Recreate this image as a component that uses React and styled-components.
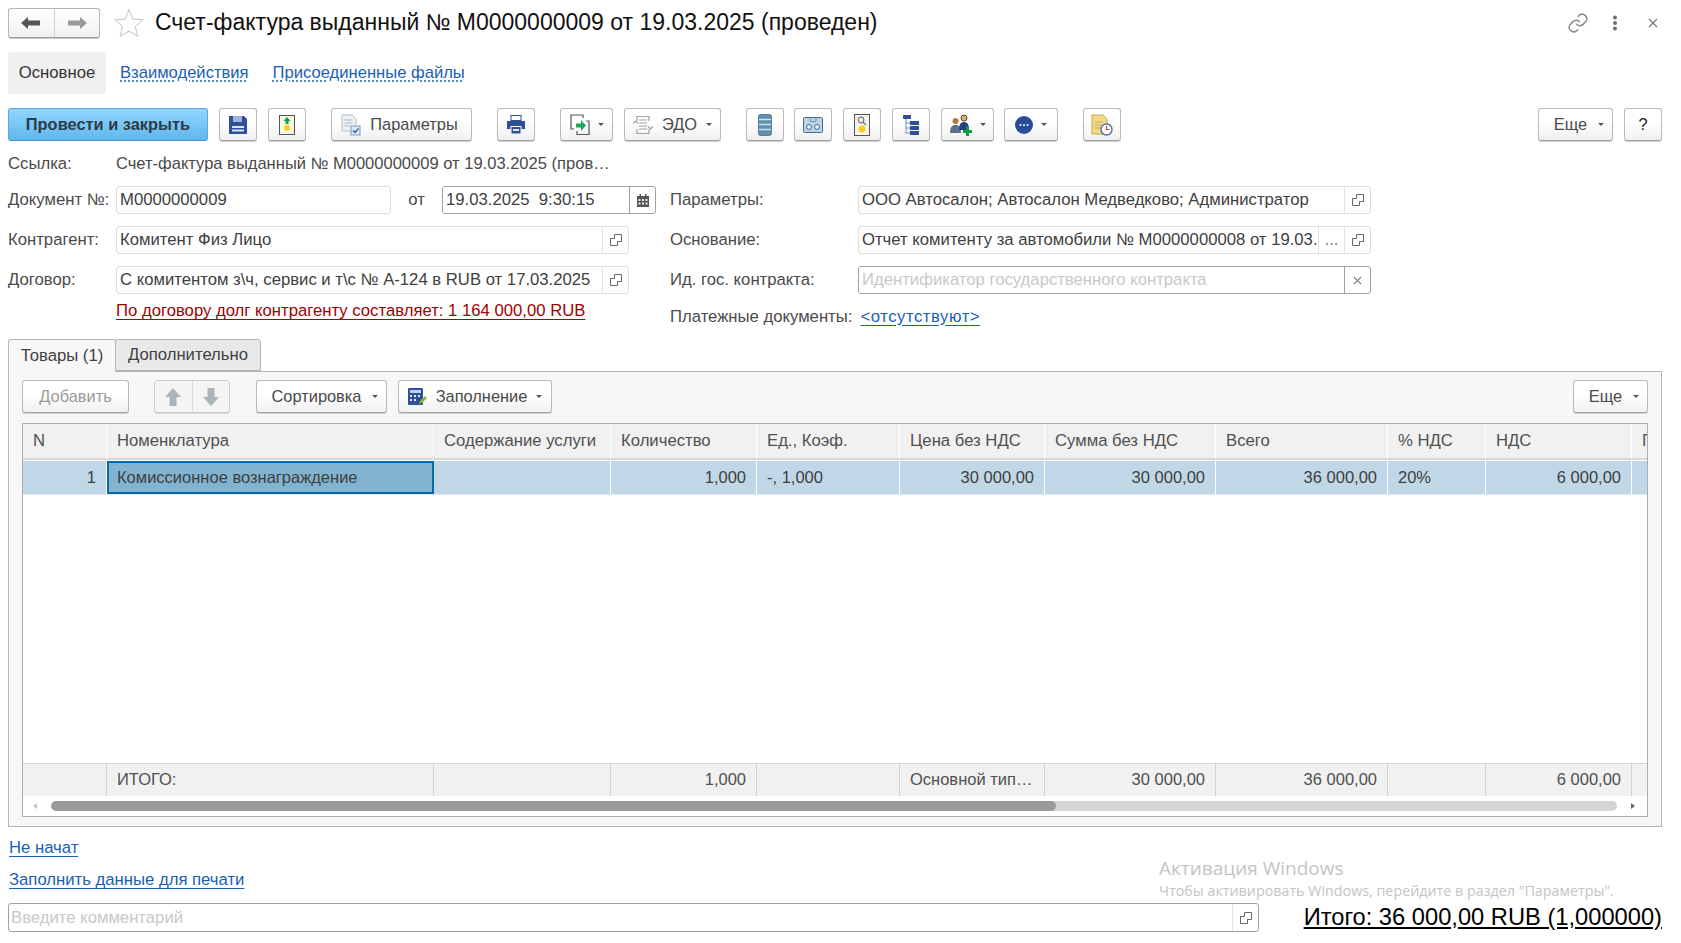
import React from 'react';
import styled, { createGlobalStyle } from 'styled-components';

const GlobalStyle = createGlobalStyle`
  html, body {
    margin: 0;
    padding: 0;
    background: #fff;
    overflow: hidden;
  }
  body {
    font-family: "Liberation Sans", Arial, sans-serif;
    font-size: 16.7px;
    color: #4a4a4a;
  }
`;

const Page = styled.div`
  position: relative;
  width: 1681px;
  height: 943px;
  padding: 0 19px 0 8px;
  box-sizing: border-box;
  display: flex;
  flex-direction: column;
`;

const TitleBar = styled.div`
  height: 52px;
  display: flex;
  align-items: center;
  padding-bottom: 7px;
  box-sizing: border-box;
`;
const NavGroup = styled.div`
  display: flex;
  width: 92px;
  height: 30px;
  border: 1px solid #b5b5b5;
  border-bottom-color: #9c9c9c;
  border-radius: 3px;
  box-sizing: border-box;
  background: linear-gradient(#fff, #f1f1f1);
  box-shadow: 0 1px 0 #c8c8c8;
`;
const NavCell = styled.div`
  flex: 1;
  display: flex;
  align-items: center;
  justify-content: center;
  & + & {
    border-left: 1px solid #cfcfcf;
  }
`;
const Star = styled.div`
  width: 32px;
  height: 32px;
  margin: 0 10px 0 13px;
`;
const Title = styled.h1`
  margin: 0;
  font-size: 23px;
  font-weight: 400;
  color: #111;
  white-space: nowrap;
  flex: 1;
`;
const WinIcons = styled.div`
  display: flex;
  align-items: center;
  gap: 23px;
  margin-right: 4px;
  & > :last-child {
    margin-left: 7px;
  }
`;

const SectionTabs = styled.div`
  height: 42px;
  display: flex;
  align-items: center;
  gap: 24px;
`;
const SectionActive = styled.div`
  width: 98px;
  height: 42px;
  display: flex;
  align-items: center;
  justify-content: center;
  background: #f0f0f0;
  border-radius: 3px;
  margin-right: -10px;
  color: #333;
`;
const DottedLink = styled.a`
  color: #1a5fb4;
  text-decoration: underline dotted;
  text-underline-offset: 3px;
  font-size: 16.6px;
`;

const Toolbar = styled.div`
  display: flex;
  align-items: center;
  height: 33px;
  margin-top: ${(p) => p.$top || 0}px;
`;
const Btn = styled.div`
  width: ${(p) => p.$w}px;
  height: 33px;
  margin-left: ${(p) => p.$ml || 0}px;
  padding-right: ${(p) => p.$pr || 0}px;
  padding-left: ${(p) => p.$pl || 0}px;
  box-sizing: border-box;
  display: flex;
  align-items: center;
  justify-content: center;
  gap: ${(p) => p.$gap || 0}px;
  flex-shrink: 0;
  border: 1px solid #b9b9b9;
  border-bottom-color: #a3a3a3;
  border-radius: 3px;
  background: linear-gradient(#fff 40%, #f0f0f0);
  box-shadow: 0 1px 0 #cfcfcf;
  color: ${(p) => (p.$off ? '#9b9b9b' : '#4a4a4a')};
  font-size: 16.4px;
  white-space: nowrap;
`;
const PrimaryBtn = styled(Btn)`
  border-color: #5ea5d8;
  border-bottom-color: #4a92c8;
  background: linear-gradient(#93d6ff, #5fb7ec);
  box-shadow: none;
  color: #2f3b45;
  font-weight: 700;
`;
const HelpBtn = styled(Btn)`
  color: #222;
`;
const Spacer = styled.div`
  flex: 1;
`;
const Caret = styled.span`
  width: 0;
  height: 0;
  border-left: 3px solid transparent;
  border-right: 3px solid transparent;
  border-top: 3px solid #555;
  margin-left: ${(p) => p.$ml ?? 8}px;
`;

const RefRow = styled.div`
  display: flex;
  height: 21px;
  align-items: center;
  margin-top: 12px;
`;
const RefLabel = styled.div`
  width: 108px;
`;
const RefValue = styled.div`
  color: #4a4a4a;
  font-size: 16.55px;
  white-space: nowrap;
`;

const FormGrid = styled.div`
  display: grid;
  grid-template-columns: 108px 540px 202px 513px;
  grid-auto-rows: 40px;
  margin-top: 6px;
  align-items: center;
`;
const Label = styled.div`
  white-space: nowrap;
  margin-left: ${(p) => p.$ml || 0}px;
`;
const FieldCell = styled.div`
  display: flex;
  align-items: center;
`;
const Field = styled.div`
  width: ${(p) => p.$w}px;
  height: ${(p) => p.$h || 28}px;
  flex-shrink: 0;
  box-sizing: border-box;
  display: flex;
  align-items: stretch;
  border: 1px solid ${(p) => (p.$focus ? '#a0a0a0' : '#dcdcdc')};
  border-radius: 3px;
  background: #fff;
  overflow: hidden;
`;
const FieldText = styled.div`
  flex: 1;
  min-width: 0;
  display: flex;
  align-items: center;
  padding-left: ${(p) => p.$pl ?? 3}px;
  white-space: nowrap;
  overflow: hidden;
  color: ${(p) => (p.$ph ? '#c8c8c8' : '#404040')};
`;
const FieldBtn = styled.div`
  width: ${(p) => p.$w || 25}px;
  flex-shrink: 0;
  display: flex;
  align-items: center;
  justify-content: center;
  border-left: 1px solid ${(p) => (p.$focus ? '#a0a0a0' : '#e2e2e2')};
  color: #777;
`;
const Ot = styled.div`
  width: 52px;
  text-align: center;
`;
const DebtLink = styled.a`
  color: #a00000;
  text-decoration: underline;
  text-underline-offset: 3px;
  white-space: nowrap;
  display: block;
  margin-top: -18px;
`;
const PayCell = styled.div`
  display: flex;
  align-items: center;
  white-space: nowrap;
  margin-top: -7px;
  grid-column: 3 / 5;
`;
const BlueLink = styled.a`
  color: #1a5fb4;
  text-decoration: underline;
  text-underline-offset: 3px;
  margin-left: ${(p) => p.$ml || 0}px;
  white-space: nowrap;
`;
const AbsentLink = styled(BlueLink)`
  letter-spacing: 0.55px;
`;

const TabStrip = styled.div`
  display: flex;
  height: 32px;
  margin-top: -1px;
  position: relative;
  z-index: 1;
`;
const TabItem = styled.div`
  box-sizing: border-box;
  width: ${(p) => p.$w}px;
  display: flex;
  align-items: center;
  justify-content: center;
  border: 1px solid #b5b5b5;
  border-radius: 3px 3px 0 0;
  margin-left: ${(p) => p.$ml || 0}px;
  background: ${(p) => (p.$active ? '#f7f7f7' : '#e8e8e8')};
  border-bottom-color: ${(p) => (p.$active ? '#f7f7f7' : '#b5b5b5')};
  height: ${(p) => (p.$active ? 33 : 32)}px;
  color: #404040;
`;
const Panel = styled.div`
  width: 1654px;
  height: 456px;
  box-sizing: border-box;
  border: 1px solid #b5b5b5;
  background: #f7f7f7;
  padding: 8px 13px 9px 13px;
  display: flex;
  flex-direction: column;
`;
const ArrowPair = styled.div`
  display: flex;
  width: 76px;
  height: 33px;
  margin-left: 25px;
  box-sizing: border-box;
  border: 1px solid #cdcdcd;
  border-radius: 3px;
  background: #f4f4f4;
  box-shadow: 0 1px 0 #d8d8d8;
`;
const ArrowCell = styled.div`
  flex: 1;
  display: flex;
  align-items: center;
  justify-content: center;
  & + & {
    border-left: 1px solid #d9d9d9;
  }
`;

const columns = '84px 327px 177px 146px 143px 145px 171px 172px 98px 146px 60px';

const Table = styled.div`
  margin-top: 10px;
  flex: 1;
  min-height: 0;
  border: 1px solid #adadad;
  background: #fff;
  display: flex;
  flex-direction: column;
  overflow: hidden;
  font-size: 16.5px;
`;
const Row = styled.div`
  display: grid;
  grid-template-columns: ${columns};
  flex-shrink: 0;
  height: ${(p) => p.$h}px;
  margin-bottom: ${(p) => p.$mb || 0}px;
`;
const HeadCell = styled.div`
  background: #f1f1f1;
  border-right: 1px solid #fff;
  border-bottom: 2px solid #d8d8d8;
  box-sizing: border-box;
  display: flex;
  align-items: center;
  padding-left: 10px;
  white-space: nowrap;
  overflow: hidden;
  color: #505050;
  font-size: 16.7px;
`;
const Cell = styled.div`
  background: #bfd7e6;
  border-right: 1px solid #fff;
  box-sizing: border-box;
  display: flex;
  align-items: center;
  justify-content: ${(p) => (p.$right ? 'flex-end' : 'flex-start')};
  padding: 0 ${(p) => (p.$right ? 10 : 0)}px 0 ${(p) => (p.$right ? 0 : 10)}px;
  color: #3f3f3f;
  white-space: nowrap;
`;
const ActiveCell = styled(Cell)`
  background: #82b3d1;
  border: 2px solid #0b6aa2;
  padding-left: 8px;
`;
const TableBody = styled.div`
  flex: 1;
  min-height: 0;
  border-top: 1px solid #e6e6e6;
`;
const FootCell = styled.div`
  background: #f1f1f1;
  border-right: 1px solid #d4d4d4;
  border-top: 1px solid #d4d4d4;
  box-sizing: border-box;
  display: flex;
  align-items: center;
  justify-content: ${(p) => (p.$right ? 'flex-end' : 'flex-start')};
  padding: 0 ${(p) => (p.$right ? 10 : 0)}px 2px ${(p) => (p.$right ? 0 : 10)}px;
  white-space: nowrap;
  overflow: hidden;
  color: #505050;
`;
const ScrollBar = styled.div`
  height: 20px;
  flex-shrink: 0;
  display: flex;
  align-items: center;
  padding: 0 12px 0 10px;
  gap: 14px;
`;
const ScrollTrack = styled.div`
  flex: 1;
  height: 10px;
  border-radius: 5px;
  background: #d4d4d4;
  overflow: hidden;
`;
const ScrollThumb = styled.div`
  height: 100%;
  width: ${(p) => p.$pct}%;
  background: #9a9a9a;
  border-radius: 5px;
`;
const ScrollArrow = styled.span`
  width: 0;
  height: 0;
  border-top: 3px solid transparent;
  border-bottom: 3px solid transparent;
  border-${(p) => (p.$left ? 'right' : 'left')}: 4px solid ${(p) => (p.$left ? '#c0c0c0' : '#666')};
`;

const LinkLine = styled.div`
  margin-top: ${(p) => p.$top}px;
  height: 20px;
  padding-left: 1px;
  display: flex;
  align-items: center;
`;
const BottomRow = styled.div`
  display: flex;
  align-items: center;
  justify-content: space-between;
  margin-top: 13px;
`;
const Total = styled.a`
  font-size: 23.7px;
  color: #000;
  text-decoration: underline;
  white-space: nowrap;
`;
const Watermark = styled.div`
  position: absolute;
  left: 1159px;
  top: 856px;
  color: #c4c4c4;
  pointer-events: none;
  white-space: nowrap;
`;
const WatermarkTitle = styled.div`
  font-family: "Open Sans", "Liberation Sans", sans-serif;
  font-size: 19px;
  line-height: 24px;
`;
const WatermarkText = styled.div`
  font-family: "Open Sans", "Liberation Sans", sans-serif;
  font-size: 14.3px;
  line-height: 22px;
`;

/* icons */
const ArrowLeft = ({ color }) => (
  <svg width="22" height="14" viewBox="0 0 22 14">
    <path d="M1 7 8 1v3.5h12v5H8V13z" fill={color} />
  </svg>
);
const ArrowRight = ({ color }) => (
  <svg width="22" height="14" viewBox="0 0 22 14">
    <path d="M21 7 14 1v3.5H2v5h12V13z" fill={color} />
  </svg>
);
const StarIcon = () => (
  <svg width="32" height="32" viewBox="0 0 32 32">
    <path
      d="M16 2.5l3.9 9.6 10.3.7-7.9 6.6 2.5 10-8.8-5.4-8.8 5.4 2.5-10-7.9-6.6 10.3-.7z"
      fill="#fff"
      stroke="#c4c4c4"
    />
  </svg>
);
const LinkIcon = () => (
  <svg width="22" height="22" viewBox="0 0 24 24" fill="none" stroke="#8a8a8a" strokeWidth="1.6">
    <path d="M10 13a5 5 0 0 0 7.5.5l3-3a5 5 0 0 0-7-7l-1.7 1.7" />
    <path d="M14 11a5 5 0 0 0-7.5-.5l-3 3a5 5 0 0 0 7 7l1.7-1.7" />
  </svg>
);
const KebabIcon = () => (
  <svg width="6" height="16" viewBox="0 0 6 16" fill="#707070">
    <circle cx="3" cy="2.5" r="2" />
    <circle cx="3" cy="8" r="2" />
    <circle cx="3" cy="13.5" r="2" />
  </svg>
);
const CloseIcon = ({ size = 10, color = '#777' }) => (
  <svg width={size} height={size} viewBox="0 0 10 10" stroke={color} strokeWidth="1.2">
    <path d="M1 1l8 8M9 1l-8 8" />
  </svg>
);
const SaveIcon = () => (
  <svg width="18" height="18" viewBox="0 0 18 18">
    <path d="M0 0h15l3 3v15H0z" fill="#2f4f96" />
    <rect x="4" y="0" width="9" height="6" fill="#9fb2d8" />
    <rect x="3" y="10" width="12" height="2" fill="#dbe3f2" />
    <rect x="3" y="13.5" width="12" height="2" fill="#dbe3f2" />
  </svg>
);
const PostIcon = () => (
  <svg width="16" height="20" viewBox="0 0 16 20">
    <rect x="0.5" y="0.5" width="15" height="19" fill="#f7f5e6" stroke="#555" />
    <path d="M8 2l3.5 4H9.5v3h-3V6H4.5z" fill="#13a04a" />
    <circle cx="8" cy="13" r="3" fill="#f6cf1f" />
  </svg>
);
const ParamsIcon = () => (
  <svg width="20" height="22" viewBox="0 0 20 22">
    <path d="M1 1h10l4 4v12H1z" fill="#eef2f6" stroke="#b6bfc9" />
    <path d="M3.5 6h8M3.5 9h8M3.5 12h6" stroke="#a5b2bf" />
    <rect x="10" y="12" width="9" height="9" fill="#dbe8f5" stroke="#7d9cc0" />
    <path d="M12 16.5l2 2 3.5-4" fill="none" stroke="#2f5f9e" strokeWidth="1.4" />
  </svg>
);
const PrintIcon = () => (
  <svg width="18" height="19" viewBox="0 0 18 19">
    <rect x="4" y="0.5" width="10" height="5" fill="#fff" stroke="#2f4f96" />
    <path d="M0 6h18v8h-3.5v-3h-11v3H0z" fill="#2f4f96" />
    <rect x="4.5" y="12" width="9" height="6.5" fill="#2f4f96" />
    <rect x="6" y="14" width="6" height="2" fill="#dfe6f3" />
  </svg>
);
const ExchangeIcon = () => (
  <svg width="20" height="22" viewBox="0 0 20 22">
    <path d="M13 4V1H1v14h3" fill="none" stroke="#555" strokeWidth="1.2" />
    <path d="M7 17v3.500h12V7h-3" fill="none" stroke="#555" strokeWidth="1.2" />
    <path d="M6 9.500h5V6l5 5.500-5 5.500v-3.500H6z" fill="#1fa85a" />
  </svg>
);
const EdoIcon = () => (
  <svg width="20" height="20" viewBox="0 0 20 20" fill="none" stroke="#a2a2a2" strokeWidth="1.2">
    <path d="M4 6V1.500h12V6M4 14v4.500h12V14" />
    <path d="M6 5h8M6 8h8M6 11h8M6 14h8" />
    <path d="M0 8.500l2.500-2.500L5 8.500M15 11.500l2.500 2.500 2.500-2.500" />
  </svg>
);
const ListIcon = () => (
  <svg width="14" height="22" viewBox="0 0 14 22">
    <rect x="0.5" y="0.5" width="13" height="21" rx="2" fill="#5f8fb0" stroke="#5f7f9f" />
    <path d="M1 5.500h12M1 10.500h12M1 15.500h12" stroke="#cfe0ec" strokeWidth="1.4" />
  </svg>
);
const CassetteIcon = () => (
  <svg width="20" height="16" viewBox="0 0 20 16">
    <rect x="0.5" y="0.5" width="19" height="15" rx="1" fill="#b9d3e8" stroke="#4a6a8a" />
    <path d="M7 1v3.500h6V1" fill="none" stroke="#7a94ac" />
    <circle cx="6" cy="10" r="2.400" fill="#fff" stroke="#3f5f80" />
    <circle cx="14" cy="10" r="2.400" fill="#fff" stroke="#3f5f80" />
  </svg>
);
const SearchDocIcon = () => (
  <svg width="16" height="22" viewBox="0 0 16 22">
    <rect x="0.5" y="0.5" width="15" height="21" fill="#f7f5ea" stroke="#555" />
    <circle cx="7" cy="6" r="2.800" fill="none" stroke="#777" strokeWidth="1.2" />
    <path d="M9 8l3 3" stroke="#777" strokeWidth="1.2" />
    <circle cx="8" cy="15" r="3.400" fill="#f6cf1f" />
  </svg>
);
const TreeIcon = () => (
  <svg width="16" height="20" viewBox="0 0 16 20">
    <rect x="0" y="0" width="8" height="4" fill="#2f4f96" />
    <path d="M3 4v14M3 8h4M3 13h4M3 18h4" stroke="#6f8fc0" fill="none" />
    <rect x="7" y="6" width="9" height="4" fill="#2f4f96" />
    <rect x="7" y="11" width="9" height="4" fill="#2f4f96" />
    <rect x="7" y="16" width="9" height="4" fill="#2f4f96" />
  </svg>
);
const UsersIcon = () => (
  <svg width="22" height="22" viewBox="0 0 22 22">
    <circle cx="5.500" cy="7" r="3" fill="#b07a3c" />
    <path d="M0 19c0-6 2-8 5.500-8S11 13 11 19z" fill="#5d7088" />
    <circle cx="14" cy="4" r="3" fill="#e0ad6c" stroke="#3b2a18" strokeWidth="0.8" />
    <path d="M9 16c0-6 2-8 5-8s5 2 5 8z" fill="#24407f" />
    <path d="M13 16h3v-3.500h3V16h3v3h-3v3h-3v-3h-3z" fill="#0f9a48" />
  </svg>
);
const DotsIcon = () => (
  <svg width="18" height="18" viewBox="0 0 18 18">
    <circle cx="9" cy="9" r="9" fill="#2b4c96" />
    <circle cx="5.500" cy="9" r="1" fill="#fff" />
    <circle cx="9" cy="9" r="1" fill="#fff" />
    <circle cx="12.500" cy="9" r="1" fill="#fff" />
  </svg>
);
const NoteClockIcon = () => (
  <svg width="22" height="22" viewBox="0 0 22 22">
    <path d="M1 1h11l4 4v15H1z" fill="#f3d98b" stroke="#c8a64a" />
    <path d="M4 8h8M4 11h6M4 14h5" stroke="#c8a64a" />
    <circle cx="15.500" cy="15.500" r="5.500" fill="#fff" stroke="#4f6fa8" strokeWidth="1.4" />
    <path d="M15.500 12v3.500h3" fill="none" stroke="#d9453a" strokeWidth="1.2" />
  </svg>
);
const CopyIcon = () => (
  <svg width="12" height="12" viewBox="0 0 12 12" fill="none" stroke="#666">
    <path d="M4.500 4.500V.5h7v7h-4" />
    <path d="M.5 4.500h4M.5 4.500v7h7v-4" />
  </svg>
);
const CalendarIcon = () => (
  <svg width="12" height="13" viewBox="0 0 12 13">
    <path d="M0 2h2.500V0h1.500v2h4V0h1.500v2H12v11H0z" fill="#555" />
    <path d="M1.500 5h2v2h-2zM5 5h2v2H5zM8.500 5h2v2h-2zM1.500 8.500h2v2h-2zM5 8.500h2v2H5zM8.500 8.500h2v2h-2z" fill="#eee" />
  </svg>
);
const BigArrow = ({ down }) => (
  <svg width="16" height="18" viewBox="0 0 16 18">
    <path d={down ? 'M8 18l8-9h-4.500V0h-7v9H0z' : 'M8 0l8 9h-4.500v9h-7V9H0z'} fill="#a9b4bb" />
  </svg>
);
const CalcIcon = () => (
  <svg width="19" height="18" viewBox="0 0 19 18">
    <rect x="0" y="0" width="15" height="17" rx="1" fill="#2f4f96" />
    <rect x="2" y="2" width="11" height="3" fill="#bcd0ea" />
    <path d="M2 7h2v2H2zM6 7h2v2H6zM10 7h2v2h-2zM2 11h2v2H2zM6 11h2v2H6z" fill="#dfe7f4" />
    <path d="M11 16l1-3 5-5 2 2-5 5z" fill="#8cb92e" />
  </svg>
);

const heads = [
  'N',
  'Номенклатура',
  'Содержание услуги',
  'Количество',
  'Ед., Коэф.',
  'Цена без НДС',
  'Сумма без НДС',
  'Всего',
  '% НДС',
  'НДС',
  'П',
];

const foot = [
  { text: '' },
  { text: 'ИТОГО:' },
  { text: '' },
  { text: '1,000', right: true },
  { text: '' },
  { text: 'Основной тип…' },
  { text: '30 000,00', right: true },
  { text: '36 000,00', right: true },
  { text: '' },
  { text: '6 000,00', right: true },
  { text: '' },
];

export default function App() {
  return (
    <Page>
      <GlobalStyle />
      <TitleBar>
        <NavGroup>
          <NavCell>
            <ArrowLeft color="#555" />
          </NavCell>
          <NavCell>
            <ArrowRight color="#9a9a9a" />
          </NavCell>
        </NavGroup>
        <Star>
          <StarIcon />
        </Star>
        <Title>Счет-фактура выданный № М0000000009 от 19.03.2025 (проведен)</Title>
        <WinIcons>
          <LinkIcon />
          <KebabIcon />
          <CloseIcon />
        </WinIcons>
      </TitleBar>

      <SectionTabs>
        <SectionActive>Основное</SectionActive>
        <DottedLink>Взаимодействия</DottedLink>
        <DottedLink>Присоединенные файлы</DottedLink>
      </SectionTabs>

      <Toolbar $top={14}>
        <PrimaryBtn $w={200}>Провести и закрыть</PrimaryBtn>
        <Btn $w={38} $ml={11}>
          <SaveIcon />
        </Btn>
        <Btn $w={38} $ml={11}>
          <PostIcon />
        </Btn>
        <Btn $w={141} $ml={25} $gap={9} $pr={4}>
          <ParamsIcon />
          Параметры
        </Btn>
        <Btn $w={38} $ml={25}>
          <PrintIcon />
        </Btn>
        <Btn $w={53} $ml={25}>
          <ExchangeIcon />
          <Caret />
        </Btn>
        <Btn $w={97} $ml={11} $gap={9}>
          <EdoIcon />
          ЭДО
          <Caret $ml={0} />
        </Btn>
        <Btn $w={38} $ml={25}>
          <ListIcon />
        </Btn>
        <Btn $w={38} $ml={10}>
          <CassetteIcon />
        </Btn>
        <Btn $w={38} $ml={11}>
          <SearchDocIcon />
        </Btn>
        <Btn $w={38} $ml={11}>
          <TreeIcon />
        </Btn>
        <Btn $w={53} $ml={11}>
          <UsersIcon />
          <Caret />
        </Btn>
        <Btn $w={54} $ml={10}>
          <DotsIcon />
          <Caret />
        </Btn>
        <Btn $w={38} $ml={25}>
          <NoteClockIcon />
        </Btn>
        <Spacer />
        <Btn $w={75} $pl={7}>
          Еще
          <Caret $ml={11} />
        </Btn>
        <HelpBtn $w={38} $ml={11}>
          ?
        </HelpBtn>
      </Toolbar>

      <RefRow>
        <RefLabel>Ссылка:</RefLabel>
        <RefValue>Счет-фактура выданный № М0000000009 от 19.03.2025 (пров…</RefValue>
      </RefRow>

      <FormGrid>
        <Label>Документ №:</Label>
        <FieldCell>
          <Field $w={275}>
            <FieldText>М0000000009</FieldText>
          </Field>
          <Ot>от</Ot>
          <Field $w={214} $focus>
            <FieldText>19.03.2025&nbsp;&nbsp;9:30:15</FieldText>
            <FieldBtn $focus>
              <CalendarIcon />
            </FieldBtn>
          </Field>
        </FieldCell>
        <Label $ml={14}>Параметры:</Label>
        <Field $w={513}>
          <FieldText>ООО Автосалон; Автосалон Медведково; Администратор</FieldText>
          <FieldBtn>
            <CopyIcon />
          </FieldBtn>
        </Field>

        <Label>Контрагент:</Label>
        <FieldCell>
          <Field $w={513}>
            <FieldText>Комитент Физ Лицо</FieldText>
            <FieldBtn>
              <CopyIcon />
            </FieldBtn>
          </Field>
        </FieldCell>
        <Label $ml={14}>Основание:</Label>
        <Field $w={513}>
          <FieldText>Отчет комитенту за автомобили № М0000000008 от 19.03.</FieldText>
          <FieldBtn>...</FieldBtn>
          <FieldBtn>
            <CopyIcon />
          </FieldBtn>
        </Field>

        <Label>Договор:</Label>
        <FieldCell>
          <Field $w={513}>
            <FieldText>С комитентом з\ч, сервис и т\с № А-124 в RUB от 17.03.2025</FieldText>
            <FieldBtn>
              <CopyIcon />
            </FieldBtn>
          </Field>
        </FieldCell>
        <Label $ml={14}>Ид. гос. контракта:</Label>
        <Field $w={513} $focus>
          <FieldText $ph>Идентификатор государственного контракта</FieldText>
          <FieldBtn $focus>
            <CloseIcon size={9} />
          </FieldBtn>
        </Field>

        <div />
        <FieldCell>
          <DebtLink>По договору долг контрагенту составляет: 1 164 000,00 RUB</DebtLink>
        </FieldCell>
        <PayCell>
          <Label $ml={14}>Платежные документы:</Label>
          <AbsentLink $ml={8}>&lt;отсутствуют&gt;</AbsentLink>
        </PayCell>
      </FormGrid>

      <TabStrip>
        <TabItem $w={108} $active>
          Товары (1)
        </TabItem>
        <TabItem $w={146} $ml={-1}>
          Дополнительно
        </TabItem>
      </TabStrip>
      <Panel>
        <Toolbar>
          <Btn $w={107} $off>
            Добавить
          </Btn>
          <ArrowPair>
            <ArrowCell>
              <BigArrow />
            </ArrowCell>
            <ArrowCell>
              <BigArrow down />
            </ArrowCell>
          </ArrowPair>
          <Btn $w={131} $ml={26} $pl={7}>
            Сортировка
            <Caret $ml={11} />
          </Btn>
          <Btn $w={154} $ml={11} $gap={9}>
            <CalcIcon />
            Заполнение
            <Caret $ml={0} />
          </Btn>
          <Spacer />
          <Btn $w={75} $pl={7}>
            Еще
            <Caret $ml={11} />
          </Btn>
        </Toolbar>
        <Table>
          <Row $h={36} $mb={1}>
            {heads.map((h) => (
              <HeadCell key={h}>{h}</HeadCell>
            ))}
          </Row>
          <Row $h={33}>
            <Cell $right>1</Cell>
            <ActiveCell>Комиссионное вознаграждение</ActiveCell>
            <Cell />
            <Cell $right>1,000</Cell>
            <Cell>-, 1,000</Cell>
            <Cell $right>30 000,00</Cell>
            <Cell $right>30 000,00</Cell>
            <Cell $right>36 000,00</Cell>
            <Cell>20%</Cell>
            <Cell $right>6 000,00</Cell>
            <Cell />
          </Row>
          <TableBody />
          <Row $h={33}>
            {foot.map((c, i) => (
              <FootCell key={i} $right={c.right}>
                {c.text}
              </FootCell>
            ))}
          </Row>
          <ScrollBar>
            <ScrollArrow $left />
            <ScrollTrack>
              <ScrollThumb $pct={64.2} />
            </ScrollTrack>
            <ScrollArrow />
          </ScrollBar>
        </Table>
      </Panel>

      <LinkLine $top={11}>
        <BlueLink>Не начат</BlueLink>
      </LinkLine>
      <LinkLine $top={12}>
        <BlueLink>Заполнить данные для печати</BlueLink>
      </LinkLine>
      <BottomRow>
        <Field $w={1251} $h={29} $focus>
          <FieldText $ph $pl={2}>
            Введите комментарий
          </FieldText>
          <FieldBtn>
            <CopyIcon />
          </FieldBtn>
        </Field>
        <Total>Итого: 36 000,00 RUB (1,000000)</Total>
      </BottomRow>

      <Watermark>
        <WatermarkTitle>Активация Windows</WatermarkTitle>
        <WatermarkText>Чтобы активировать Windows, перейдите в раздел "Параметры".</WatermarkText>
      </Watermark>
    </Page>
  );
}
